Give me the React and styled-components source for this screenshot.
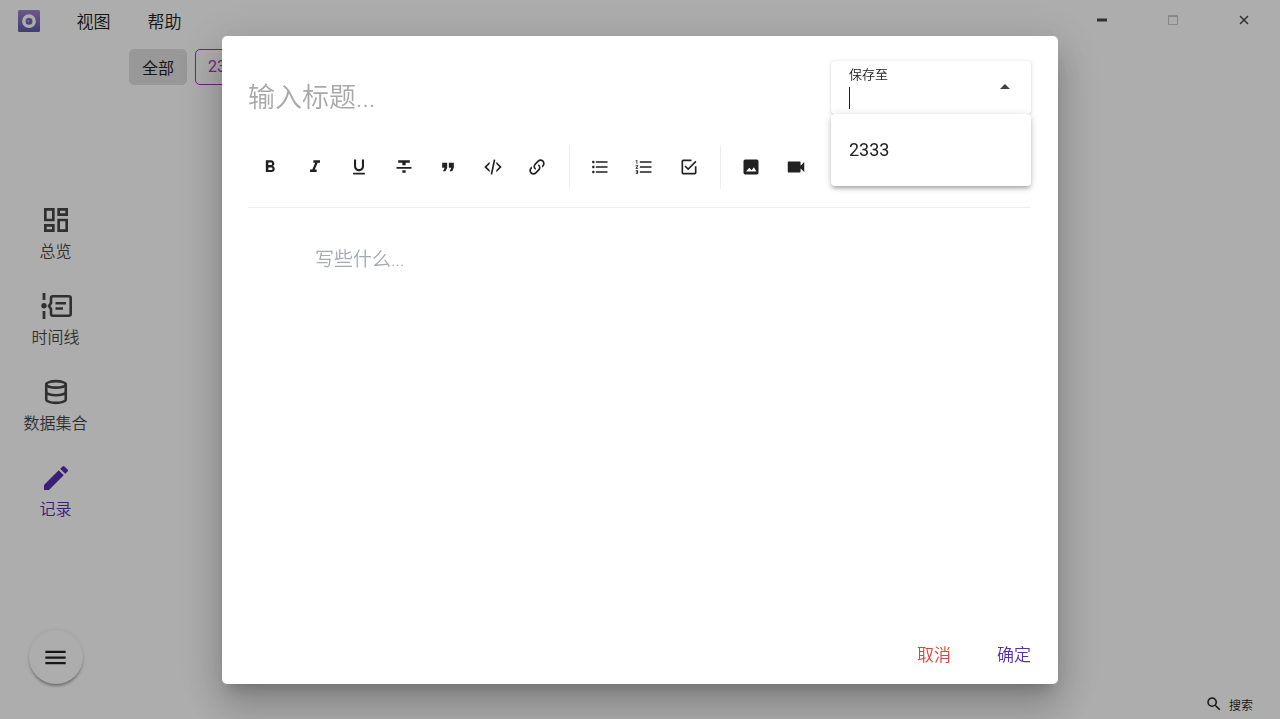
import React, { useState } from 'react';
import styled, { createGlobalStyle, ThemeProvider } from 'styled-components';
import {
  MdOutlineDashboard,
  MdModeEdit,
  MdMenu,
  MdSearch,
  MdFormatBold,
  MdFormatItalic,
  MdFormatUnderlined,
  MdFormatStrikethrough,
  MdFormatQuote,
  MdFormatListBulleted,
  MdFormatListNumbered,
} from 'react-icons/md';
import { Database } from 'lucide-react';

const theme = {
  colors: {
    background: '#ffffff',
    primary: '#5530b0',
    accent: '#9c3caf',
    danger: '#db4437',
    text: '#212121',
    nav: '#484848',
    placeholder: '#a9a9a9',
    border: '#eeeeee',
  },
  fonts: "Roboto, 'Noto Sans CJK SC', sans-serif",
};

const GlobalStyle = createGlobalStyle`
  * {
    box-sizing: border-box;
  }

  body {
    margin: 0;
    background: ${theme.colors.background};
    color: ${theme.colors.text};
    font-family: ${theme.fonts};
    font-size: 16px;
    overflow: hidden;
  }

  button,
  input,
  textarea {
    font-family: inherit;
    color: inherit;
    border: none;
    background: none;
    padding: 0;
    outline: none;
  }

  button {
    cursor: pointer;
  }
`;

const Window = styled.div`
  display: flex;
  flex-direction: column;
  height: 100vh;
`;

const TitleBar = styled.header`
  display: flex;
  align-items: center;
  height: 41px;
  flex-shrink: 0;
`;

const Logo = styled.svg`
  width: 22px;
  height: 22px;
  margin: 0 18px;
`;

const MenuButton = styled.button`
  width: 71px;
  height: 41px;
  font-size: 17px;
  font-weight: 350;
`;

const WindowControls = styled.div`
  display: flex;
  align-self: flex-start;
  margin-left: auto;
  padding-right: 1px;
`;

const WindowButton = styled.button`
  display: flex;
  align-items: center;
  justify-content: center;
  width: 71px;
  height: 40px;
  color: ${({ theme, disabled }) => (disabled ? '#c8c8c8' : theme.colors.nav)};
`;

const Body = styled.div`
  display: flex;
  flex: 1;
  min-height: 0;
`;

const Sidebar = styled.aside`
  display: flex;
  flex-direction: column;
  align-items: center;
  justify-content: space-between;
  width: 111px;
  padding: 163px 0 35px;
`;

const Nav = styled.nav`
  display: flex;
  flex-direction: column;
  gap: 26px;
  width: 100%;
`;

const NavLink = styled.a`
  display: flex;
  flex-direction: column;
  align-items: center;
  gap: 4px;
  height: 60px;
  font-size: 16px;
  font-weight: 350;
  line-height: 24px;
  text-decoration: none;
  color: ${({ theme, $active }) => ($active ? theme.colors.primary : theme.colors.nav)};
`;

const NavIcon = styled.span`
  display: flex;
  align-items: center;
  justify-content: center;
  height: 32px;
`;

const Fab = styled.button`
  display: flex;
  align-items: center;
  justify-content: center;
  width: 54px;
  height: 54px;
  border-radius: 50%;
  background: #ffffff;
  box-shadow: 0 3px 3px -1px rgba(0, 0, 0, 0.3), 0 1px 4px rgba(0, 0, 0, 0.12);
`;

const Content = styled.main`
  display: flex;
  flex: 1;
  flex-direction: column;
  justify-content: space-between;
  padding: 8px 27px 4px 18px;
`;

const Chips = styled.div`
  display: flex;
  gap: 8px;
`;

const Chip = styled.button`
  height: 36px;
  padding: 0 12px 1px;
  border: 1px solid ${({ theme, $selected }) => ($selected ? '#e0e0e0' : theme.colors.accent)};
  border-radius: 5px;
  background: ${({ $selected }) => ($selected ? '#e0e0e0' : 'transparent')};
  color: ${({ theme, $selected }) => ($selected ? theme.colors.text : theme.colors.accent)};
  font-size: 16px;
`;

const SearchButton = styled.button`
  display: flex;
  align-items: center;
  align-self: flex-end;
  gap: 6px;
  height: 22px;
  font-size: 12px;
  font-weight: 350;
`;

const Scrim = styled.div`
  position: fixed;
  inset: 0;
  display: flex;
  align-items: center;
  justify-content: center;
  background: rgba(0, 0, 0, 0.32);
`;

const Dialog = styled.section`
  display: flex;
  flex-direction: column;
  width: min(836px, 90vw);
  height: calc(100vh - 71px);
  padding: 25px 27px 14px 26px;
  border-radius: 5px;
  background: #ffffff;
  box-shadow: 0 11px 15px -7px rgba(0, 0, 0, 0.2), 0 24px 38px 3px rgba(0, 0, 0, 0.14),
    0 9px 46px 8px rgba(0, 0, 0, 0.12);
`;

const DialogHeader = styled.div`
  display: flex;
  align-items: flex-start;
  gap: 24px;
`;

const TitleInput = styled.input`
  flex: 1;
  min-width: 0;
  height: 74px;
  font-size: 27px;
  font-weight: 350;

  &::placeholder {
    color: ${({ theme }) => theme.colors.placeholder};
  }
`;

const Combo = styled.div`
  position: relative;
  width: 200px;
`;

const ComboField = styled.div`
  display: flex;
  align-items: center;
  justify-content: space-between;
  height: 53px;
  padding: 4px 21px 5px 18px;
  border-radius: 4px;
  box-shadow: 0 0 4px rgba(0, 0, 0, 0.12), 0 1px 2px rgba(0, 0, 0, 0.12);
`;

const ComboText = styled.div`
  position: relative;
  display: flex;
  flex-direction: column;
  width: 130px;
`;

const ComboLabel = styled.label`
  font-size: 13px;
  font-weight: 350;
  line-height: 20px;
`;

const ComboInput = styled.input`
  width: 100%;
  height: 24px;
  font-size: 18px;
  caret-color: transparent;
`;

const Caret = styled.span`
  position: absolute;
  left: 0;
  bottom: 0;
  width: 1px;
  height: 22px;
  background: ${({ theme }) => theme.colors.text};
`;

const ComboArrow = styled.span`
  border: 5px solid transparent;
  border-top: none;
  border-bottom-color: #404040;
`;

const ComboMenu = styled.ul`
  position: absolute;
  top: 53px;
  left: 0;
  right: 0;
  margin: 0;
  padding: 9px 0;
  border-radius: 4px;
  background: #ffffff;
  list-style: none;
  box-shadow: 0 3px 4px -1px rgba(0, 0, 0, 0.3), 0 1px 8px rgba(0, 0, 0, 0.14);
`;

const ComboOption = styled.li`
  padding: 0 18px;
  font-size: 18px;
  line-height: 54px;
`;

const ToolbarRow = styled.div`
  padding: 10px 0 18px;
  border-bottom: 1px solid ${({ theme }) => theme.colors.border};
`;

const Toolbar = styled.div`
  display: flex;
  width: 570px;
  height: 44px;
`;

const ToolButton = styled.button`
  display: flex;
  flex: 1;
  align-items: center;
  justify-content: center;
`;

const ToolDivider = styled.span`
  width: 2px;
  margin: 0 8px;
  border-right: 1px solid ${({ theme }) => theme.colors.border};
`;

const Editor = styled.textarea`
  flex: 1;
  padding: 38px 67px;
  resize: none;
  font-size: 19px;
  font-weight: 350;
  line-height: 28px;

  &::placeholder {
    color: #a3aab0;
  }
`;

const DialogActions = styled.div`
  display: flex;
  justify-content: flex-end;
  gap: 46px;
`;

const ActionButton = styled.button`
  height: 32px;
  font-size: 17px;
  font-weight: 350;
  color: ${({ theme, $danger }) => ($danger ? theme.colors.danger : theme.colors.primary)};
`;

const AppLogo = () => (
  <Logo viewBox="0 0 22 22" aria-hidden="true">
    <defs>
      <linearGradient id="logoFill" x1="0" y1="0" x2="0" y2="1">
        <stop offset="0" stopColor="#a57fd0" />
        <stop offset="1" stopColor="#5c5ba8" />
      </linearGradient>
    </defs>
    <rect width="22" height="22" rx="1.5" fill="url(#logoFill)" />
    <circle cx="11" cy="11.2" r="5.2" fill="none" stroke="#ffffff" strokeWidth="3.4" />
    <circle cx="11" cy="11.2" r="2.2" fill="#6a5fae" />
    <circle cx="10.3" cy="10.9" r="1" fill="#bdb4e0" />
  </Logo>
);

const TimelineIcon = () => (
  <svg width="32" height="28" viewBox="0 0 32 28" fill="none" stroke="currentColor" aria-hidden="true">
    <path d="M4 1v7M4 19v8" strokeWidth="2.8" />
    <circle cx="4" cy="13.8" r="2.7" fill="currentColor" stroke="none" />
    <path
      d="M13 4.2h15.700a2 2 0 0 1 2 2v15.600a2 2 0 0 1-2 2H13a2 2 0 0 1-2-2V17l-2-3 2-3V6.200a2 2 0 0 1 2-2z"
      strokeWidth="2.6"
    />
    <path d="M15.500 11.200h10.500M15.500 16.500h7.500" strokeWidth="2.5" />
  </svg>
);

const ToolSvg = ({ children, size = 20 }) => (
  <svg width={size} height={size} viewBox="0 0 24 24" fill="currentColor" aria-hidden="true">
    {children}
  </svg>
);

const CodeIcon = () => (
  <ToolSvg>
    <path d="M12.890 3l1.960.4L11.110 21l-1.960-.4L12.890 3M19.590 12L16 8.410V5.580L22.420 12L16 18.410V15.580L19.590 12M1.580 12L8 5.580V8.410L4.410 12L8 15.580V18.410L1.580 12z" />
  </ToolSvg>
);

const LinkIcon = () => (
  <ToolSvg>
    <path d="M10.590 13.410C11 13.800 11 14.440 10.590 14.830C10.200 15.220 9.560 15.220 9.170 14.830C7.220 12.880 7.220 9.710 9.170 7.760L12.710 4.220C14.660 2.270 17.830 2.270 19.780 4.220C21.730 6.170 21.730 9.340 19.780 11.290L18.290 12.780C18.300 11.960 18.170 11.140 17.890 10.360L18.360 9.880C19.540 8.710 19.540 6.810 18.360 5.640C17.190 4.460 15.290 4.460 14.120 5.640L10.590 9.170C9.410 10.340 9.410 12.240 10.590 13.410z" />
    <path d="M13.410 9.170C13.800 8.780 14.440 8.780 14.830 9.170C16.780 11.120 16.780 14.290 14.830 16.240L11.290 19.780C9.340 21.730 6.170 21.730 4.220 19.780C2.270 17.830 2.270 14.660 4.220 12.710L5.710 11.220C5.700 12.040 5.830 12.860 6.110 13.650L5.640 14.120C4.460 15.290 4.460 17.190 5.640 18.360C6.810 19.540 8.710 19.540 9.880 18.360L13.410 14.830C14.590 13.660 14.590 11.760 13.410 10.590C13 10.200 13 9.560 13.410 9.170z" />
  </ToolSvg>
);

const CheckIcon = () => (
  <ToolSvg>
    <path d="M19 19H5V5h10V3H5a2 2 0 0 0-2 2v14a2 2 0 0 0 2 2h14a2 2 0 0 0 2-2v-8h-2zM7.910 10.080 6.500 11.500 11 16 21 6l-1.410-1.420L11 13.170z" />
  </ToolSvg>
);

const ImageIcon = () => (
  <ToolSvg>
    <path
      fillRule="evenodd"
      d="M5 3h14a2 2 0 0 1 2 2v14a2 2 0 0 1-2 2H5a2 2 0 0 1-2-2V5a2 2 0 0 1 2-2zM6 17.500h12.500L15.500 12.300l-2.800 3.500-2.700-3z"
    />
  </ToolSvg>
);

const VideoIcon = () => (
  <ToolSvg size={22}>
    <path d="M17 10.500V7a1 1 0 0 0-1-1H4a1 1 0 0 0-1 1v10a1 1 0 0 0 1 1h12a1 1 0 0 0 1-1v-3.500l4 4v-11z" />
  </ToolSvg>
);

const navItems = [
  { label: '总览', icon: <MdOutlineDashboard size={32} /> },
  { label: '时间线', icon: <TimelineIcon /> },
  { label: '数据集合', icon: <Database size={26} strokeWidth={2.4} /> },
  { label: '记录', icon: <MdModeEdit size={32} />, active: true },
];

const toolGroups = [
  [
    { name: 'bold', icon: <MdFormatBold size={20} /> },
    { name: 'italic', icon: <MdFormatItalic size={20} /> },
    { name: 'underline', icon: <MdFormatUnderlined size={20} /> },
    { name: 'strike', icon: <MdFormatStrikethrough size={20} /> },
    { name: 'quote', icon: <MdFormatQuote size={20} /> },
    { name: 'code', icon: <CodeIcon /> },
    { name: 'link', icon: <LinkIcon /> },
  ],
  [
    { name: 'bullet list', icon: <MdFormatListBulleted size={20} /> },
    { name: 'ordered list', icon: <MdFormatListNumbered size={20} /> },
    { name: 'check list', icon: <CheckIcon /> },
  ],
  [
    { name: 'image', icon: <ImageIcon /> },
    { name: 'video', icon: <VideoIcon /> },
  ],
];

const NoteDialog = () => {
  const [title, setTitle] = useState('');
  const [collection, setCollection] = useState('');
  const [body, setBody] = useState('');

  return (
    <Scrim>
      <Dialog role="dialog" aria-modal="true">
        <DialogHeader>
          <TitleInput
            aria-label="标题"
            placeholder="输入标题..."
            value={title}
            onChange={(e) => setTitle(e.target.value)}
          />
          <Combo>
            <ComboField>
              <ComboText>
                <ComboLabel htmlFor="collection">保存至</ComboLabel>
                <ComboInput
                  id="collection"
                  role="combobox"
                  aria-expanded="true"
                  aria-controls="collection-menu"
                  value={collection}
                  onChange={(e) => setCollection(e.target.value)}
                />
                <Caret />
              </ComboText>
              <ComboArrow />
            </ComboField>
            <ComboMenu id="collection-menu" role="listbox">
              <ComboOption role="option" onClick={() => setCollection('2333')}>
                2333
              </ComboOption>
            </ComboMenu>
          </Combo>
        </DialogHeader>

        <ToolbarRow>
          <Toolbar role="toolbar">
            {toolGroups.map((group, index) => (
              <React.Fragment key={group[0].name}>
                {index > 0 && <ToolDivider />}
                {group.map((tool) => (
                  <ToolButton key={tool.name} type="button" aria-label={tool.name}>
                    {tool.icon}
                  </ToolButton>
                ))}
              </React.Fragment>
            ))}
          </Toolbar>
        </ToolbarRow>

        <Editor
          aria-label="内容"
          placeholder="写些什么..."
          value={body}
          onChange={(e) => setBody(e.target.value)}
        />

        <DialogActions>
          <ActionButton type="button" $danger>
            取消
          </ActionButton>
          <ActionButton type="button">确定</ActionButton>
        </DialogActions>
      </Dialog>
    </Scrim>
  );
};

const App = () => (
  <ThemeProvider theme={theme}>
    <GlobalStyle />
    <Window>
      <TitleBar>
        <AppLogo />
        <MenuButton>视图</MenuButton>
        <MenuButton>帮助</MenuButton>
        <WindowControls>
          <WindowButton aria-label="minimize">
            <svg width="10" height="10" viewBox="0 0 10 10">
              <path d="M0 5h10" stroke="currentColor" strokeWidth="3" />
            </svg>
          </WindowButton>
          <WindowButton aria-label="maximize" disabled>
            <svg width="10" height="10" viewBox="0 0 10 10" fill="none" stroke="currentColor">
              <path d="M0.500 0.500h9v9h-9zM0 1.500h10" />
            </svg>
          </WindowButton>
          <WindowButton aria-label="close">
            <svg width="10" height="10" viewBox="0 0 10 10">
              <path d="M1 1l8 8M9 1l-8 8" stroke="currentColor" strokeWidth="1.500" />
            </svg>
          </WindowButton>
        </WindowControls>
      </TitleBar>

      <Body>
        <Sidebar>
          <Nav>
            {navItems.map((item) => (
              <NavLink key={item.label} href="#" $active={item.active}>
                <NavIcon>{item.icon}</NavIcon>
                {item.label}
              </NavLink>
            ))}
          </Nav>
          <Fab aria-label="menu">
            <MdMenu size={27} />
          </Fab>
        </Sidebar>

        <Content>
          <Chips>
            <Chip $selected>全部</Chip>
            <Chip>2333</Chip>
          </Chips>
          <SearchButton>
            <MdSearch size={18} />
            搜索
          </SearchButton>
        </Content>
      </Body>
    </Window>
    <NoteDialog />
  </ThemeProvider>
);

export default App;
